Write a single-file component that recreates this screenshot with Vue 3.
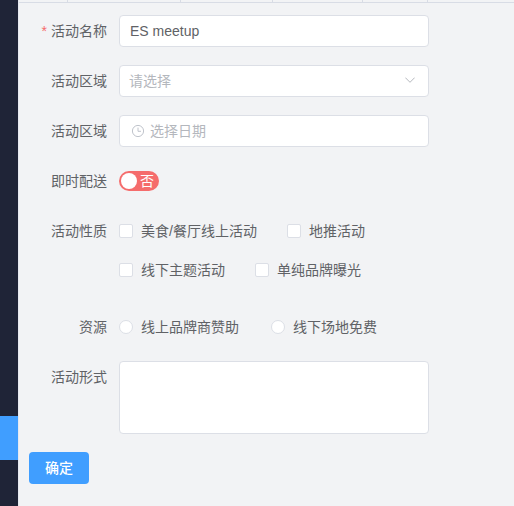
<script setup>
const tabs = [49, 113, 92, 90, 65, 87]
</script>

<template>
  <div class="page">
    <aside class="sidebar">
      <div class="active"></div>
    </aside>
    <main class="main">
      <div class="tabs">
        <span v-for="(w, i) in tabs" :key="i" class="tab" :style="{ width: w + 'px' }"></span>
      </div>
      <form class="form" @submit.prevent>
        <div class="row first">
          <label class="label"><i class="req">*</i>活动名称</label>
          <div class="field"><span class="value">ES meetup</span></div>
        </div>
        <div class="row">
          <label class="label">活动区域</label>
          <div class="field between">
            <span class="ph select-ph">请选择</span>
            <svg class="arrow" width="10" height="6" viewBox="0 0 10 6"><path d="M0.3 0.6 5 5.3 9.7 0.6" fill="none" stroke="#b4b7bd" stroke-width="1"/></svg>
          </div>
        </div>
        <div class="row">
          <label class="label">活动区域</label>
          <div class="field">
            <svg class="clock" width="14" height="14" viewBox="0 0 14 14"><circle cx="7" cy="7" r="5.6" fill="none" stroke="#c0c4cc" stroke-width="1"/><path d="M7 3.6V7.3H10" fill="none" stroke="#c0c4cc" stroke-width="1"/></svg>
            <span class="ph">选择日期</span>
          </div>
        </div>
        <div class="row switch-row">
          <label class="label">即时配送</label>
          <div class="switch"><span class="knob"></span><span class="switch-text">否</span></div>
        </div>
        <div class="row check-row">
          <label class="label">活动性质</label>
          <div class="checks">
            <div class="line">
              <span class="opt w168"><span class="box"></span><span class="txt">美食/餐厅线上活动</span></span>
              <span class="opt"><span class="box"></span><span class="txt">地推活动</span></span>
            </div>
            <div class="line">
              <span class="opt w136"><span class="box"></span><span class="txt">线下主题活动</span></span>
              <span class="opt"><span class="box"></span><span class="txt">单纯品牌曝光</span></span>
            </div>
          </div>
        </div>
        <div class="row radio-row">
          <label class="label">资源</label>
          <div class="line">
            <span class="opt w152"><span class="box round"></span><span class="txt">线上品牌商赞助</span></span>
            <span class="opt"><span class="box round"></span><span class="txt">线下场地免费</span></span>
          </div>
        </div>
        <div class="row area-row">
          <label class="label">活动形式</label>
          <div class="area"></div>
        </div>
        <button class="submit" type="button">确定</button>
      </form>
    </main>
  </div>
</template>

<style>
html, body { margin: 0; background: #f2f3f5; overflow: hidden; }
</style>

<style scoped>
.page {
  display: flex;
  height: 506px;
  width: 514px;
  overflow: hidden;
  font-family: "Liberation Sans", "Noto Sans CJK SC", sans-serif;
  font-size: 14px;
  color: #606266;
}
.sidebar {
  width: 18px;
  flex: none;
  background: #1f2437;
  padding-top: 416px;
  box-sizing: border-box;
}
.active { height: 44px; background: #409eff; }
.main { flex: 1; min-width: 0; background: #f2f3f5; border-left: 1px solid #e6e9f0; }
.tabs { display: flex; height: 2px; border-bottom: 1px solid #d8dce5; }
.tab { flex: none; box-sizing: border-box; border-right: 1px solid #d8dce5; }
.form { padding: 12px 0 0 10px; }
.row { display: flex; align-items: flex-start; margin-bottom: 18px; }
.label {
  width: 78px;
  margin-right: 12px;
  flex: none;
  text-align: right;
  line-height: 32px;
  height: 32px;
}
.req { color: #f56c6c; font-style: normal; margin-right: 4px; }
.field {
  width: 310px;
  height: 32px;
  box-sizing: border-box;
  background: #fff;
  border: 1px solid #dcdfe6;
  border-radius: 4px;
  padding: 0 10px;
  display: flex;
  align-items: center;
}
.between { justify-content: space-between; padding-right: 13px; }
.clock { margin: 0 5px 0 1px; flex: none; }
.ph { color: #b4b7bd; margin-bottom: 2px; }
.select-ph { margin-left: -1px; }
.arrow { margin-bottom: 3px; }
.switch-row { margin-bottom: 18px; align-items: center; }
.switch {
  position: relative;
  width: 40px;
  height: 20px;
  border-radius: 10px;
  background: #f56c6c;
}
.knob {
  position: absolute;
  left: 2px;
  top: 2px;
  width: 16px;
  height: 16px;
  border-radius: 50%;
  background: #fff;
}
.switch-text {
  position: absolute;
  left: 21px;
  top: 0;
  line-height: 20px;
  color: #fff;
}
.checks { display: flex; flex-direction: column; gap: 7px; }
.line { display: flex; align-items: center; height: 32px; }
.opt { display: inline-flex; align-items: center; white-space: nowrap; }
.txt { margin-bottom: 2px; }
.w168 { width: 168px; }
.w136 { width: 136px; }
.w152 { width: 152px; }
.box {
  width: 14px;
  height: 14px;
  box-sizing: border-box;
  background: #fff;
  border: 1px solid #dcdfe6;
  border-radius: 2px;
  margin-right: 8px;
  flex: none;
}
.round { border-radius: 50%; }
.check-row { margin-bottom: 0; }
.radio-row { margin-top: 25px; margin-bottom: 18px; }
.area-row { margin-bottom: 18px; }
.area {
  width: 310px;
  height: 73px;
  box-sizing: border-box;
  background: #fff;
  border: 1px solid #dcdfe6;
  border-radius: 4px;
}
.submit {
  display: block;
  width: 60px;
  height: 32px;
  border: 0;
  border-radius: 4px;
  background: #409eff;
  color: #fff;
  font: inherit;
  font-weight: 500;
  padding: 0 0 2px;
}
</style>
